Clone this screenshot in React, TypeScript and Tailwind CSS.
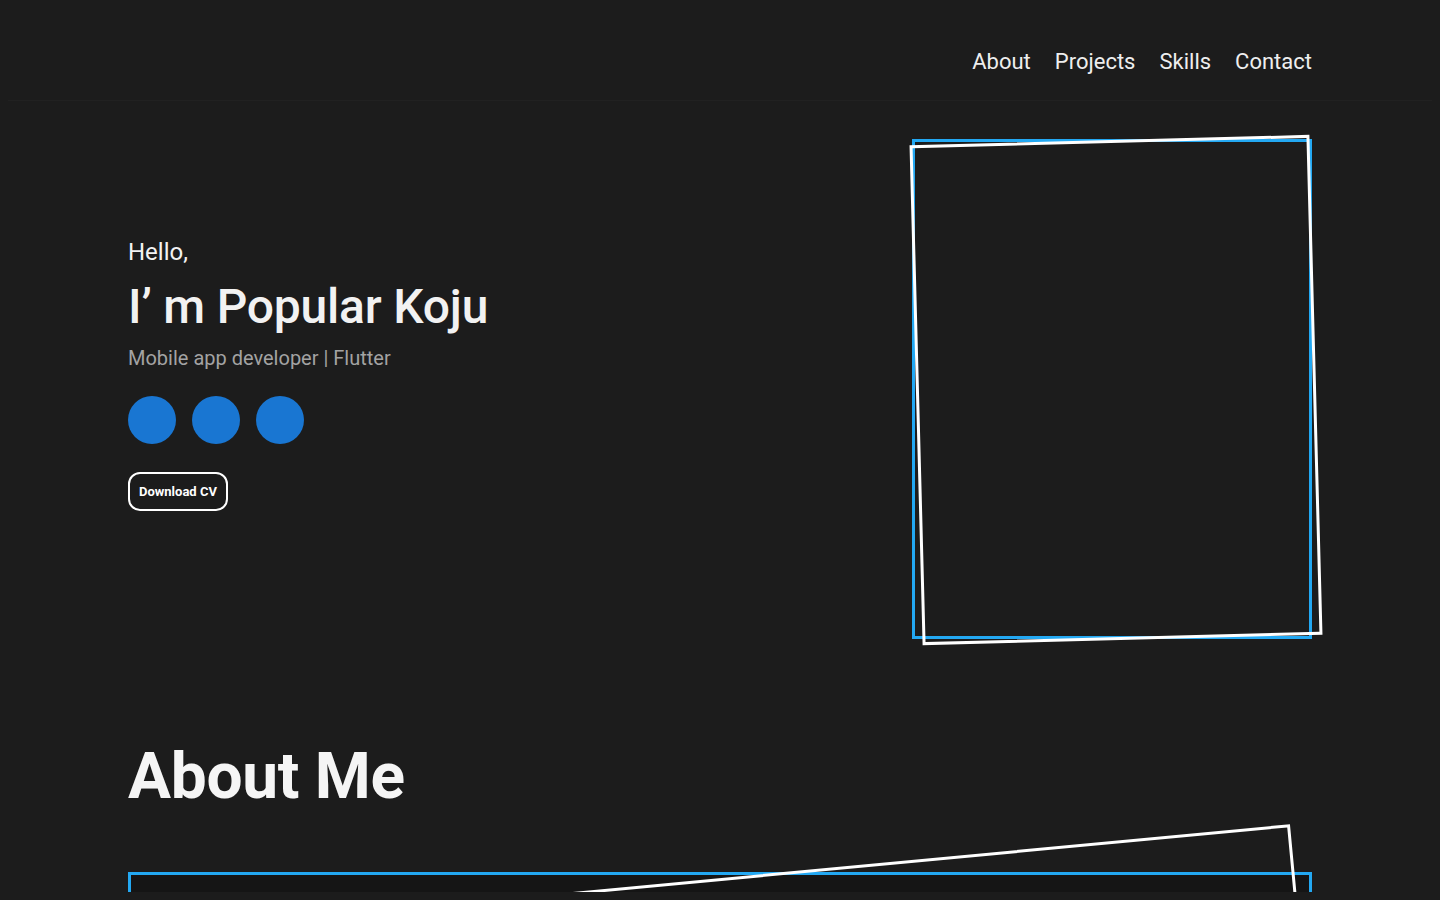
import { FC } from "react";

const navLinks = ["About", "Projects", "Skills", "Contact"];

const Header: FC = () => (
  <header className="flex h-[93px] shrink-0 items-center justify-end gap-6 border-b border-[#212121] px-[120px] pt-4">
    {navLinks.map((link) => (
      <a key={link} href={`#${link.toLowerCase()}`} className="text-[22px] leading-7 text-[#eeeeee]">
        {link}
      </a>
    ))}
  </header>
);

const Intro: FC = () => (
  <div className="flex flex-col pb-8">
    <p className="text-[24px] leading-8 text-[#f2f2f2]">Hello,</p>
    <h1 className="mt-[10px] text-[48px] font-medium leading-[58px] tracking-[-0.2px] text-[#f2f2f2]">I’ m Popular Koju</h1>
    <p className="mt-2 text-[20px] leading-7 text-[#a3a3a3]">Mobile app developer | Flutter</p>
    <div className="mt-6 flex gap-4">
      {[0, 1, 2].map((i) => (
        <span key={i} className="h-12 w-12 rounded-full bg-[#1976d2]" />
      ))}
    </div>
    <div className="mt-7">
      <button className="rounded-xl border-2 border-white px-[9px] py-[10px] text-[13px] font-bold leading-[15px] text-white">
        Download CV
      </button>
    </div>
  </div>
);

const PhotoFrame: FC = () => (
  <div className="relative h-[500px] w-[400px] shrink-0">
    <div className="h-full w-full border-[3px] border-[#23a8f2]" />
    <div className="absolute inset-0 translate-x-1 translate-y-[1px] rotate-[-1.5deg] border-[3px] border-white" />
  </div>
);

const AboutMe: FC = () => (
  <section id="about" className="px-[120px] pt-[99px]">
    <h2 className="text-[64px] font-bold leading-[77px] tracking-[-0.3px] text-[#f5f5f5]">About Me</h2>
    <div className="relative mt-[57px] h-[413px]">
      <div className="h-full w-full border-[3px] border-[#23a8f2] bg-[#151515]" />
      <div className="absolute inset-0 translate-y-[7px] rotate-[-5.4deg] border-[3px] border-white" />
    </div>
  </section>
);

export default function App() {
  return (
    <div
      className="flex h-screen flex-col overflow-hidden bg-[#1c1c1c] p-2"
      style={{ fontFamily: "Roboto, 'Noto Sans', sans-serif" }}
    >
      <div className="flex flex-1 flex-col overflow-hidden">
        <Header />
        <main className="flex flex-col">
          <section className="flex items-center justify-between px-[120px] pt-[38px]">
            <Intro />
            <PhotoFrame />
          </section>
          <AboutMe />
        </main>
      </div>
    </div>
  );
}
